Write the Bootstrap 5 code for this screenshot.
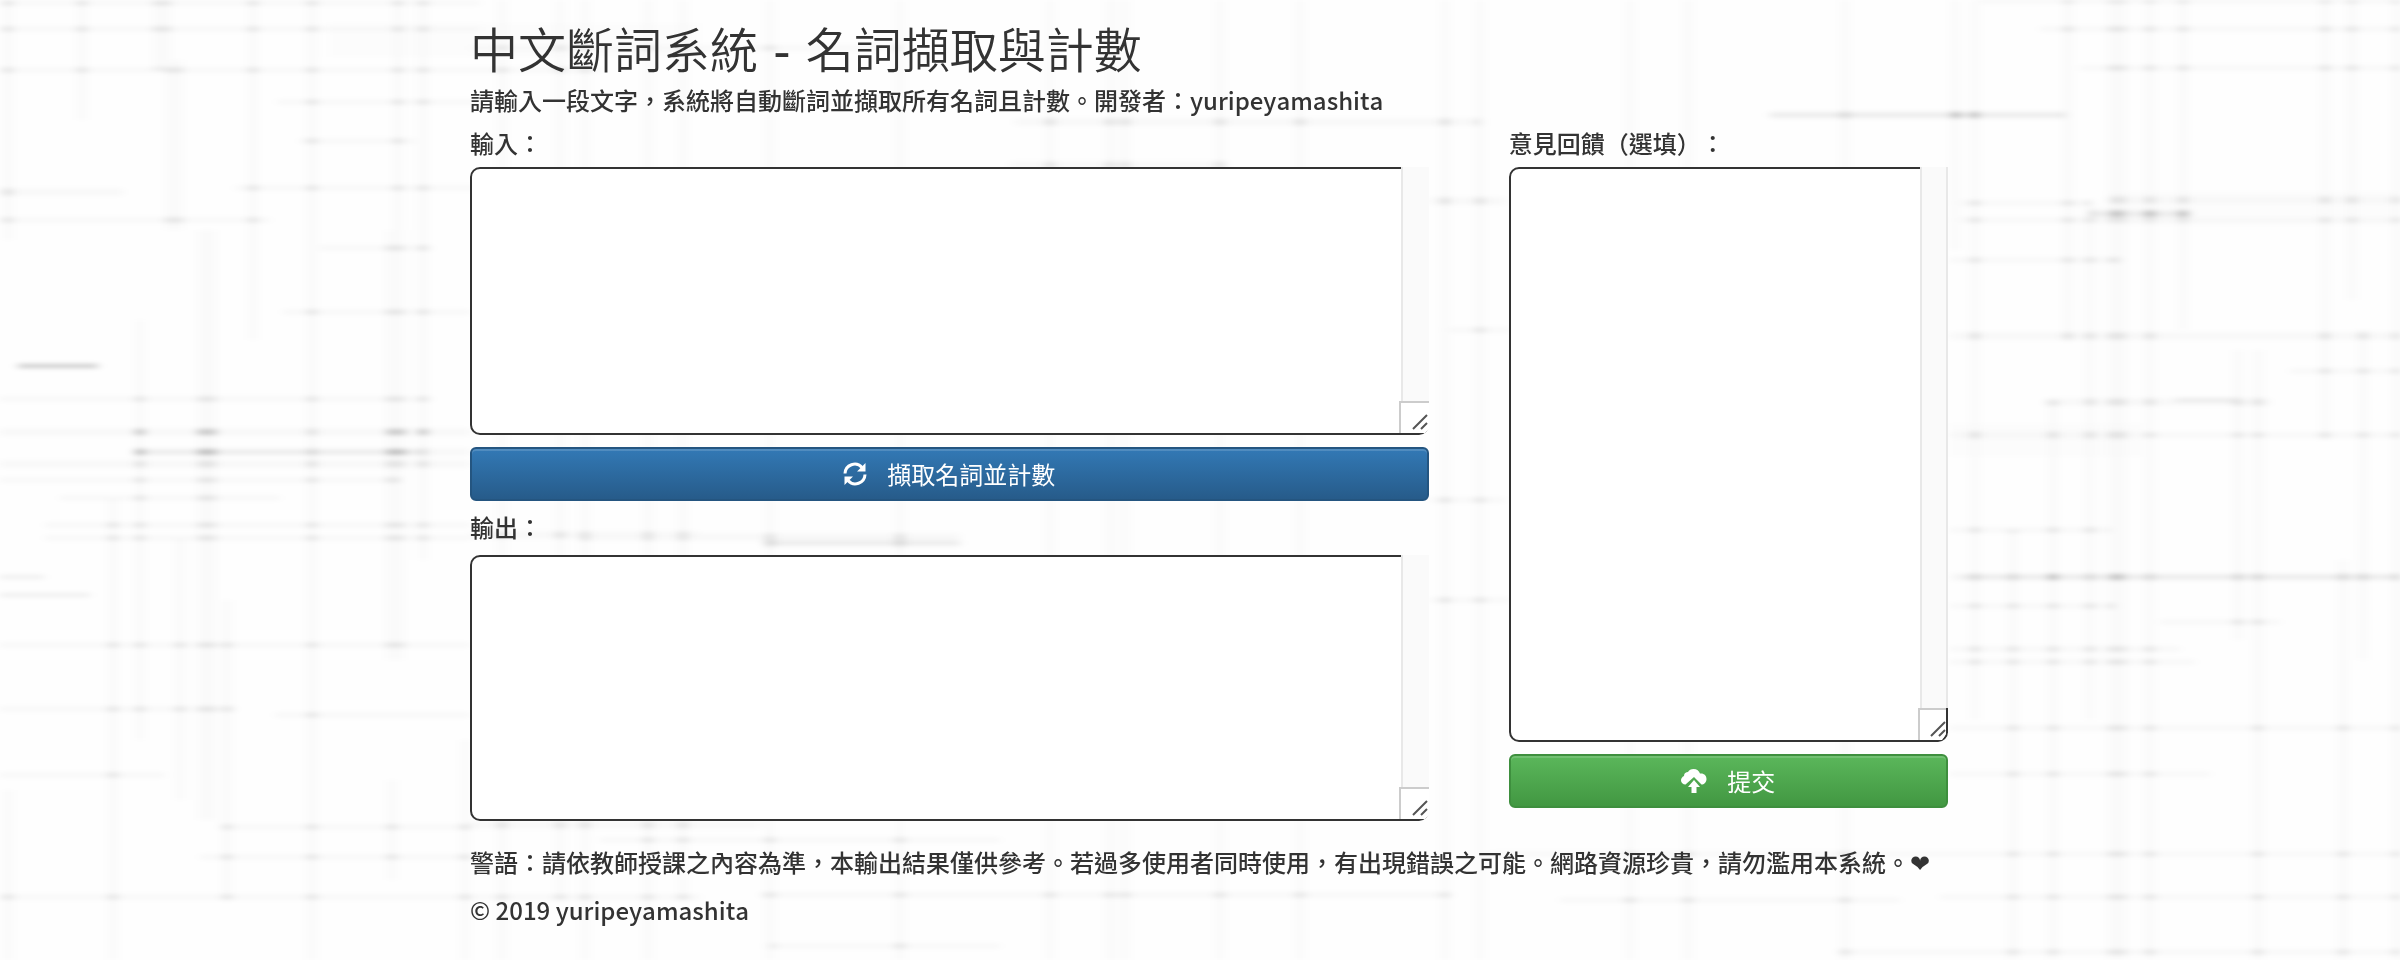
<!DOCTYPE html>
<html lang="zh-Hant">
<head>
<meta charset="utf-8">
<meta name="viewport" content="width=device-width, initial-scale=1">
<title>中文斷詞系統 - 名詞擷取與計數</title>
<link href="https://cdn.jsdelivr.net/npm/bootstrap@5.3.0/dist/css/bootstrap.min.css" rel="stylesheet">
<style>
body { background: #fefefe; color: #333; font: 500 24px/34px "Noto Sans CJK TC", sans-serif; font-kerning: none; text-spacing-trim: space-all; font-feature-settings: "chws" 0, "halt" 0; }
.page-wrap { max-width: 1496px; padding: 15px 0 0 18px; }
.main-title { font-family: "DejaVu Sans", "Noto Sans CJK TC", sans-serif; font-size: 48px; line-height: 64px; font-weight: 400; margin: 0; }
.main-title .hanzi { font-family: "Noto Sans CJK TC", sans-serif; font-weight: 350; }
.row-wide { --bs-gutter-x: 80px; }
.field-label { display: block; line-height: 36px; margin: 0 0 6px; }
.editor { position: relative; }
.editor textarea { display: block; width: 100%; height: 268px; border: 2px solid #333; border-radius: 10px; background: #fff; padding: 8px 40px 8px 12px; resize: none; overflow: hidden; color: #333; }
.editor .output-box { height: 266px; }
.editor .tall { height: 575px; }
.scroll-rail { position: absolute; top: 0; right: 0; bottom: 32px; width: 28px; background: #fafafa; border-left: 2px solid #e8e8e8; pointer-events: none; }
.rail-edge { border-right: 2px solid #e8e8e8; }
.grip { position: absolute; right: 0; bottom: 2px; width: 30px; height: 32px; pointer-events: none; }
.action-btn { display: flex; align-items: center; justify-content: center; gap: 20px; width: 100%; height: 54px; margin-top: 12px; padding: 0; border-width: 2px; border-radius: 6px; font-size: 24px; line-height: 34px; font-weight: 400; color: #fff; box-shadow: inset 0 2px 0 rgba(255,255,255,.15); }
.action-btn:hover { color: #fff; }
.blue-btn { background: linear-gradient(#337ab7, #265a88) border-box; border-color: #245580; }
.green-btn { background: linear-gradient(#5cb85c, #419641) border-box; border-color: #3e8f3e; }
.notice { margin-bottom: 14px; }
.texture { position: fixed; inset: 0; width: 100%; height: 100%; z-index: -1; }
</style>
</head>
<body>
<svg class="texture" viewBox="0 0 2400 960" preserveAspectRatio="xMidYMin slice" fill="none" aria-hidden="true">
  <defs>
    <filter id="soft" filterUnits="userSpaceOnUse" x="0" y="0" width="2400" height="960"><feGaussianBlur stdDeviation="5 2"/></filter>
    <g id="warp">
      <path stroke-width="10" d="M8 0V240M8 790V960M82 0V120M253 0V340M398 0V640M423 0V560M392 780V880M113 500V960M140 320V740M180 540V800M227 600V900M312 0V960M465 740V960M502 0V960M560 0V900M585 0V960M648 0V960M683 0V900M770 0V960M900 0V960M1050 0V960M1110 0V960M1125 0V960M1220 0V960M1300 0V960M1445 0V960M1480 0V960M1630 0V960M1688 0V960M1845 0V960M1955 0V250M1975 0V720M2013 530V960M2053 400V960M2068 0V340M2090 200V720M2150 0V960M2183 0V330M2238 350V640M2258 350V960M2325 0V440M2352 0V300M2343 560V960M2363 330V660M2397 0V960"/>
      <path stroke-width="18" d="M162 0V70M207 230V820M395 230V660M2117 0V960M174 60V230"/>
    </g>
    <g id="weft">
      <path stroke-width="5" d="M0 3H480M0 29H480M0 70H600M277 102H480M300 141H415M235 188H480M0 220H270M320 248H430M283 312H470M0 399H430M60 498H280M45 525H470M45 538H470M0 645H470M0 709H235M275 715H470M0 775H165M222 827H470M200 857H470M0 897H700M0 480H400M1980 1H2400M2040 29H2400M2080 68H2400M1960 203H2090M1960 220H2400M1950 260H2120M2290 371H2400M1950 435H2400M1950 530H2110M1950 606H2115M2160 622H2280M1950 649H2180M1950 662H2195M1950 728H2400M1950 774H2210M1940 854H2400M1940 897H2400M1980 952H2400M470 48H900M1450 330H1510M1430 600H1510M1430 500H1505M600 840H1000M760 895H1450M1560 900H1900M1490 854H1940M770 946H1000M1840 952H2000"/>
      <path stroke-width="7" d="M0 192H123M0 432H470M135 452H470M0 464H470M1950 336H2400M2045 402H2270M1950 577H2400M1015 122H1480M1010 165H1225M1430 201H1505M470 535H700M580 537H960M765 543H960M1770 115H2065M2090 213H2190M2110 200H2400M1950 435H2130M470 825H760"/>
    </g>
    <mask id="cross" maskUnits="userSpaceOnUse" x="0" y="0" width="2400" height="960"><use href="#warp" stroke="#fff"/></mask>
  </defs>
  <g filter="url(#soft)">
    <use href="#warp" stroke="#000" opacity=".014"/>
    <use href="#weft" stroke="#000" opacity=".025"/>
    <g mask="url(#cross)"><use href="#weft" stroke="#000" opacity=".07"/></g>
    <path stroke="#000" stroke-opacity=".2" stroke-width="4" d="M18 366H98"/>
    <path stroke="#000" stroke-opacity=".06" stroke-width="4" d="M0 577H44M0 595H90M2175 400H2235M1770 115H2065M1960 577H2400M765 543H960M135 452H420M2090 214H2190"/>
    <path stroke="#000" stroke-opacity=".12" stroke-width="5" d="M1952 115H1962M1970 115H1978M2144 214H2156M2112 214H2122M2178 214H2188M2048 577H2058M2112 577H2122M135 432H145M197 432H217M387 432H407M418 432H428M135 452H145M197 452H217M387 452H407"/>
    <path stroke="#000" stroke-opacity=".008" stroke-width="34" d="M2110 208H2400M330 40H700M1950 440H2140"/>
  </g>
</svg>

<div class="container page-wrap">
  <header>
    <h1 class="main-title"><span class="hanzi">中文斷詞系統</span> - <span class="hanzi">名詞擷取與計數</span></h1>
    <p class="mb-0">請輸入一段文字，系統將自動斷詞並擷取所有名詞且計數。開發者：yuripeyamashita</p>
  </header>
  <main class="row row-wide pt-2">
    <section class="col-8">
      <label class="field-label" for="source">輸入：</label>
      <div class="editor">
        <textarea id="source"></textarea>
        <span class="scroll-rail"></span>
        <svg class="grip" viewBox="0 0 30 32" fill="none"><path fill="#fff" d="M0 0H30V28L26 32H0z"/><path stroke="#ccc" stroke-width="2" d="M1 32V1H30"/><path stroke="#555" stroke-width="2" d="M14 28 28 14M22 28 28 22"/></svg>
      </div>
      <button type="button" class="btn action-btn blue-btn">
        <svg width="24" height="24" viewBox="0 0 24 24" fill="none" aria-hidden="true"><path stroke="#fff" stroke-width="3" d="M2 11.500A9.700 9.700 0 0 1 19 5.500M22 12.500A9.700 9.700 0 0 1 5 18.500"/><path fill="#fff" d="M22.500 1V9.500H14zM1.500 23V14.500H10z"/></svg>
        <span>擷取名詞並計數</span>
      </button>
      <label class="field-label mt-2 pb-1" for="result">輸出：</label>
      <div class="editor">
        <textarea id="result" class="output-box"></textarea>
        <span class="scroll-rail"></span>
        <svg class="grip" viewBox="0 0 30 32" fill="none"><path fill="#fff" d="M0 0H30V28L26 32H0z"/><path stroke="#ccc" stroke-width="2" d="M1 32V1H30"/><path stroke="#555" stroke-width="2" d="M14 28 28 14M22 28 28 22"/></svg>
      </div>
    </section>
    <section class="col-4">
      <label class="field-label" for="feedback">意見回饋（選填）：</label>
      <div class="editor">
        <textarea id="feedback" class="tall"></textarea>
        <span class="scroll-rail rail-edge"></span>
        <svg class="grip" viewBox="0 0 30 32" fill="none"><path fill="#fff" d="M0 0H28V26L24 32H0z"/><path stroke="#ccc" stroke-width="2" d="M1 32V1H30"/><path stroke="#333" stroke-width="2" d="M29 0V25"/><path stroke="#555" stroke-width="2" d="M13 28 27 14M21 28 27 22"/></svg>
      </div>
      <button type="button" class="btn action-btn green-btn">
        <svg width="26" height="24" viewBox="0 0 26 24" fill="#fff" aria-hidden="true"><path d="M4.500 15.500C2 15.500 0 13.500 0 11.500C0 9.500 1 8 3 7C3 4 5 3 7 3C8 1 10 0 12.500 0C16 0 18 2 19 4.500C23 4 25.500 6.500 25.500 10C25.500 13.500 23 15.500 20.500 15.500L13 8z"/><path d="M13 11 19 18H15.500V24H10.500V18H7z"/></svg>
        <span>提交</span>
      </button>
    </section>
  </main>
  <footer class="pt-4">
    <p class="notice">警語：請依教師授課之內容為準，本輸出結果僅供參考。若過多使用者同時使用，有出現錯誤之可能。網路資源珍貴，請勿濫用本系統。❤</p>
    <p class="mb-0">© 2019 yuripeyamashita</p>
  </footer>
</div>
<script src="https://cdn.jsdelivr.net/npm/bootstrap@5.3.0/dist/js/bootstrap.bundle.min.js"></script>
</body>
</html>
